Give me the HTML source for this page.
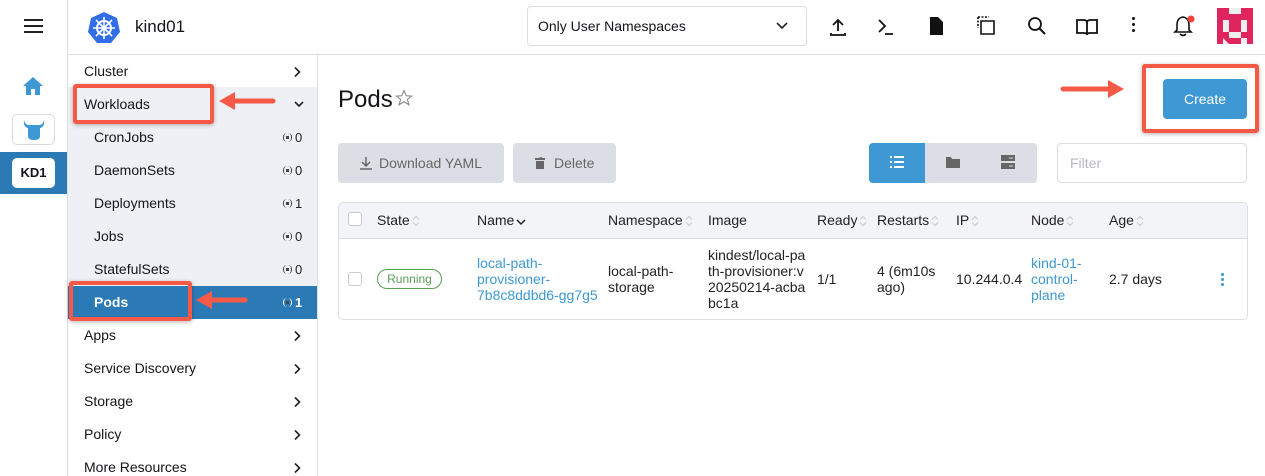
<!DOCTYPE html>
<html><head><meta charset="utf-8"><style>
*{box-sizing:border-box;margin:0;padding:0}
body{width:1265px;height:476px;overflow:hidden;background:#fff;font-family:"Liberation Sans",sans-serif;font-size:14px;color:#141419;position:relative}
.a{position:absolute}
.side div.it{position:absolute;left:84px;width:225px;font-size:14px}
.chev{position:absolute;left:293px}
.sub{left:94px !important}
.cnt{position:absolute;left:283px;font-size:13px;color:#222;width:40px}
.cnt i{display:inline-block;width:9px;height:9px;border-left:1.5px solid #444;border-right:1.5px solid #444;border-radius:4px;margin-right:3px;position:relative;top:0px}
.cnt i:after{content:"";position:absolute;left:2px;top:2.5px;width:3px;height:3px;background:#444}
.red{position:absolute;border:4px solid #f65a47;border-radius:3px;box-shadow:0 1px 4px rgba(0,0,0,.3)}
.th{position:absolute;top:212px;font-size:14px;color:#222}
.s{display:inline-block;width:8px;height:12px;vertical-align:middle;margin-left:2px}
.td{position:absolute;font-size:14px;line-height:16px;color:#222}
.lk{color:#3d98d3}
</style></head><body>
<svg width="0" height="0" style="position:absolute"><defs>
<symbol id="cr" viewBox="0 0 8 12"><path d="M2 1.5L6.5 6L2 10.5" stroke="#222" stroke-width="1.6" fill="none"/></symbol>
<symbol id="so" viewBox="0 0 8 12"><path d="M1 4.5L4 1.5L7 4.5M1 7.5L4 10.5L7 7.5" stroke="#c7c9d1" stroke-width="1" fill="none"/></symbol>
</defs></svg>
<!-- rail -->
<div class="a" style="left:24px;top:19px;width:19px;height:2px;background:#222;box-shadow:0 6px 0 #222,0 12px 0 #222"></div>
<svg class="a" style="left:22px;top:76px" width="22" height="20" viewBox="0 0 22 20"><path d="M11 1 L21 10 H18 V19 H13 V13 H9 V19 H4 V10 H1 Z" fill="#3d98d3"/></svg>
<div class="a" style="left:12px;top:114px;width:43px;height:31px;border:1px solid #d8dae2;border-radius:5px;background:#fff"></div>
<svg class="a" style="left:22px;top:119px" width="24" height="22" viewBox="0 0 24 22"><path d="M2 1 Q3 6 7 6 H17 Q21 6 22 1 Q23 8 18 9 V17 Q18 21 12 21 Q6 21 6 17 V9 Q1 8 2 1Z" fill="#3d98d3"/></svg>
<div class="a" style="left:0;top:152px;width:67px;height:42px;background:#2b7ab6"></div>
<div class="a" style="left:12px;top:158px;width:43px;height:30px;background:#fff;border-radius:5px;font-weight:bold;font-size:13px;text-align:center;line-height:30px">KD1</div>
<div class="a" style="left:67px;top:0;width:1px;height:476px;background:#dcdee6"></div>
<!-- header -->
<div class="a" style="left:68px;top:54px;width:1197px;height:1px;background:#dcdee6"></div>
<svg class="a" style="left:87px;top:11px" width="34" height="34" viewBox="0 0 34 34"><path d="M17 1 L30 7 L33 21 L24 32 H10 L1 21 L4 7Z" fill="#326de6"/><circle cx="17" cy="17" r="7" fill="none" stroke="#fff" stroke-width="2"/><path d="M17 6V28M6 17H28M9 9L25 25M25 9L9 25" stroke="#fff" stroke-width="1.6"/><circle cx="17" cy="17" r="2.5" fill="#fff"/></svg>
<div class="a" style="left:135px;top:17px;font-size:17px">kind01</div>
<div class="a" style="left:527px;top:6px;width:280px;height:40px;border:1px solid #dcdee6;border-radius:4px"></div>
<div class="a" style="left:538px;top:18px;font-size:14px">Only User Namespaces</div>
<svg class="a" style="left:776px;top:22px" width="12" height="8"><path d="M1 1L6 6L11 1" stroke="#222" stroke-width="1.6" fill="none"/></svg>
<svg class="a" style="left:829px;top:17px" width="18" height="20"><path d="M9 14V3M4 8L9 3L14 8M2 16V18H16V16" stroke="#111" stroke-width="1.8" fill="none"/></svg>
<svg class="a" style="left:876px;top:17px" width="18" height="20"><path d="M3 3L9 9L3 15M9 17H17" stroke="#111" stroke-width="1.8" fill="none"/></svg>
<svg class="a" style="left:928px;top:16px" width="16" height="20"><path d="M2 1H10L15 6V19H2Z" fill="#111"/></svg>
<svg class="a" style="left:977px;top:16px" width="20" height="20"><path d="M1 1H12M1 1V12" stroke="#111" stroke-width="1.6" fill="none" stroke-dasharray="2 1.5"/><path d="M4 5H17V18H4Z" stroke="#111" stroke-width="1.6" fill="none"/></svg>
<svg class="a" style="left:1027px;top:16px" width="20" height="20"><circle cx="8" cy="8" r="6" stroke="#111" stroke-width="1.8" fill="none"/><path d="M12.5 12.5L18 18" stroke="#111" stroke-width="2"/></svg>
<svg class="a" style="left:1076px;top:18px" width="22" height="18"><path d="M1 2H8Q11 2 11 5Q11 2 14 2H21V15H14Q11 15 11 17Q11 15 8 15H1ZM11 5V17" stroke="#111" stroke-width="1.8" fill="none"/></svg>
<div class="a" style="left:1132px;top:17px;width:3px;height:3px;background:#111;border-radius:2px;box-shadow:0 6px 0 #111,0 12px 0 #111"></div>
<svg class="a" style="left:1173px;top:15px" width="22" height="22"><path d="M10 2Q4 3 4 10V15L2 17H18L16 15V10Q16 3 10 2ZM7 19Q10 22 13 19" stroke="#111" stroke-width="1.6" fill="none"/><circle cx="18" cy="4" r="3.5" fill="#f4433a"/></svg>
<svg class="a" style="left:1217px;top:8px" width="36" height="36" viewBox="0 0 36 36"><rect width="36" height="36" fill="#eee"/><path d="M0 0H12V12H0ZM24 0H36V12H24ZM0 12H6V36H0ZM30 12H36V36H30ZM12 18H24V24H12ZM12 12H24V18H12ZM6 24H12V30H6ZM24 24H30V30H24ZM6 30H12V36ZM12 30H24V36H12Z" fill="#e0245e"/><rect x="12" y="6" width="12" height="6" fill="#e0245e"/><rect x="12" y="24" width="12" height="6" fill="#eee"/></svg>
<!-- sidebar -->
<div class="a" style="left:317px;top:55px;width:1px;height:421px;background:#dcdee6"></div>
<div class="a" style="left:68px;top:87px;width:249px;height:231px;background:#eef0f5"></div>
<div class="a" style="left:68px;top:286px;width:249px;height:33px;background:#2b7ab6"></div>
<div class="side">
<div class="it" style="top:63px">Cluster</div><svg class="chev" style="top:66px" width="8" height="12"><use href="#cr"/></svg>
<div class="it" style="top:96px">Workloads</div><svg class="chev" style="top:99px" width="12" height="10"><path d="M2 3L6 7L10 3" stroke="#222" stroke-width="1.6" fill="none"/></svg>
<div class="it sub" style="top:129px">CronJobs</div><div class="cnt" style="top:130px"><i></i>0</div>
<div class="it sub" style="top:162px">DaemonSets</div><div class="cnt" style="top:163px"><i></i>0</div>
<div class="it sub" style="top:195px">Deployments</div><div class="cnt" style="top:196px"><i></i>1</div>
<div class="it sub" style="top:228px">Jobs</div><div class="cnt" style="top:229px"><i></i>0</div>
<div class="it sub" style="top:261px">StatefulSets</div><div class="cnt" style="top:262px"><i></i>0</div>
<div class="it sub" style="top:294px;color:#fff;font-weight:bold">Pods</div><div class="cnt" style="top:295px;color:#fff;font-weight:bold"><i style="border-color:#fff"></i>1</div>
<div class="it" style="top:327px">Apps</div><svg class="chev" style="top:330px" width="8" height="12"><use href="#cr"/></svg>
<div class="it" style="top:360px">Service Discovery</div><svg class="chev" style="top:363px" width="8" height="12"><use href="#cr"/></svg>
<div class="it" style="top:393px">Storage</div><svg class="chev" style="top:396px" width="8" height="12"><use href="#cr"/></svg>
<div class="it" style="top:426px">Policy</div><svg class="chev" style="top:429px" width="8" height="12"><use href="#cr"/></svg>
<div class="it" style="top:459px">More Resources</div><svg class="chev" style="top:462px" width="8" height="12"><use href="#cr"/></svg>
</div>
<div class="red" style="left:73px;top:84px;width:141px;height:40px"></div>
<div class="red" style="left:69px;top:281px;width:123px;height:40px"></div>
<svg class="a" style="left:218px;top:90px" width="60" height="22"><path d="M12 11H55" stroke="#f65a47" stroke-width="5" stroke-linecap="round"/><path d="M1 11L17 2V20Z" fill="#f65a47"/></svg>
<svg class="a" style="left:195px;top:289px" width="55" height="22"><path d="M12 11H50" stroke="#f65a47" stroke-width="5" stroke-linecap="round"/><path d="M1 11L17 2V20Z" fill="#f65a47"/></svg>
<!-- main -->
<div class="a" style="left:338px;top:86px;font-size:24px">Pods</div>
<svg class="a" style="left:395px;top:89px" width="18" height="18" viewBox="0 0 24 24"><path d="M12 2L15 9L22 9.5L16.5 14L18.5 21L12 17L5.5 21L7.5 14L2 9.5L9 9Z" fill="none" stroke="#888" stroke-width="1.5"/></svg>
<svg class="a" style="left:1059px;top:78px" width="66" height="22"><path d="M4 11H50" stroke="#f65a47" stroke-width="5" stroke-linecap="round"/><path d="M65 11L49 2V20Z" fill="#f65a47"/></svg>
<div class="red" style="left:1142px;top:64px;width:117px;height:69px"></div>
<div class="a" style="left:1163px;top:79px;width:84px;height:40px;background:#3d98d3;border-radius:4px;color:#fff;text-align:center;line-height:40px;font-size:14px">Create</div>
<div class="a" style="left:338px;top:143px;width:166px;height:40px;background:#dcdee6;border-radius:4px;color:#666;line-height:40px;padding-left:41px">Download YAML</div>
<svg class="a" style="left:359px;top:156px" width="14" height="14"><path d="M7 1V10M3 6L7 10L11 6M1 13H13" stroke="#666" stroke-width="1.5" fill="none"/></svg>
<div class="a" style="left:513px;top:143px;width:103px;height:40px;background:#dcdee6;border-radius:4px;color:#666;line-height:40px;padding-left:41px">Delete</div>
<svg class="a" style="left:535px;top:157px" width="10" height="12"><path d="M0 1H10V3H0ZM3 0H7V1ZM1 4H9V12H1Z" fill="#666"/></svg>
<div class="a" style="left:869px;top:143px;width:168px;height:40px;background:#dcdee6;border-radius:4px"></div>
<div class="a" style="left:869px;top:143px;width:56px;height:40px;background:#3d98d3;border-radius:4px 0 0 4px"></div>
<svg class="a" style="left:890px;top:156px" width="14" height="13"><path d="M0 1H2M4 1H14M0 6H2M4 6H14M0 11H2M4 11H14" stroke="#fff" stroke-width="2"/></svg>
<svg class="a" style="left:946px;top:157px" width="14" height="11"><path d="M0 0H5L6 2H14V11H0Z" fill="#666"/></svg>
<svg class="a" style="left:1001px;top:155px" width="14" height="14"><rect width="14" height="6" fill="#666"/><rect y="8" width="14" height="6" fill="#666"/><path d="M8 3H12M8 11H12" stroke="#dcdee6"/></svg>
<div class="a" style="left:1057px;top:143px;width:190px;height:40px;border:1px solid #dcdee6;border-radius:4px;color:#b6b8c2;line-height:38px;padding-left:12px">Filter</div>
<!-- table -->
<div class="a" style="left:338px;top:202px;width:910px;height:118px;border:1px solid #dcdee6;border-radius:5px;overflow:hidden">
<div style="height:36px;background:#f3f4f8;border-bottom:1px solid #dcdee6"></div></div>
<div class="a" style="left:348px;top:212px;width:14px;height:14px;border:1px solid #c8cad2;border-radius:3px;background:#fff"></div>
<div class="a" style="left:348px;top:272px;width:14px;height:14px;border:1px solid #c8cad2;border-radius:3px;background:#fff"></div>
<div class="th" style="left:377px">State<svg class="s"><use href="#so"/></svg></div>
<div class="th" style="left:477px">Name<svg class="s" style="width:10px"><path d="M1 5L5 9L9 5" stroke="#222" stroke-width="1.5" fill="none"/></svg></div>
<div class="th" style="left:608px">Namespace<svg class="s"><use href="#so"/></svg></div>
<div class="th" style="left:708px">Image</div>
<div class="th" style="left:817px">Ready<svg class="s"><use href="#so"/></svg></div>
<div class="th" style="left:877px">Restarts<svg class="s"><use href="#so"/></svg></div>
<div class="th" style="left:956px">IP<svg class="s"><use href="#so"/></svg></div>
<div class="th" style="left:1031px">Node<svg class="s"><use href="#so"/></svg></div>
<div class="th" style="left:1109px">Age<svg class="s"><use href="#so"/></svg></div>
<div class="a" style="left:377px;top:269px;width:65px;height:20px;border:1px solid #5a9e58;border-radius:10px;color:#5a9e58;font-size:12px;text-align:center;line-height:18px">Running</div>
<div class="td lk" style="left:477px;top:255px">local-path-<br>provisioner-<br>7b8c8ddbd6-gg7g5</div>
<div class="td" style="left:608px;top:263px">local-path-<br>storage</div>
<div class="td" style="left:708px;top:247px">kindest/local-pa<br>th-provisioner:v<br>20250214-acba<br>bc1a</div>
<div class="td" style="left:817px;top:271px">1/1</div>
<div class="td" style="left:877px;top:263px">4 (6m10s<br>ago)</div>
<div class="td" style="left:956px;top:271px">10.244.0.4</div>
<div class="td lk" style="left:1031px;top:255px">kind-01-<br>control-<br>plane</div>
<div class="td" style="left:1109px;top:271px">2.7 days</div>
<div class="a" style="left:1221px;top:273px;width:3px;height:3px;background:#3d98d3;border-radius:2px;box-shadow:0 5px 0 #3d98d3,0 10px 0 #3d98d3"></div>
</body></html>
